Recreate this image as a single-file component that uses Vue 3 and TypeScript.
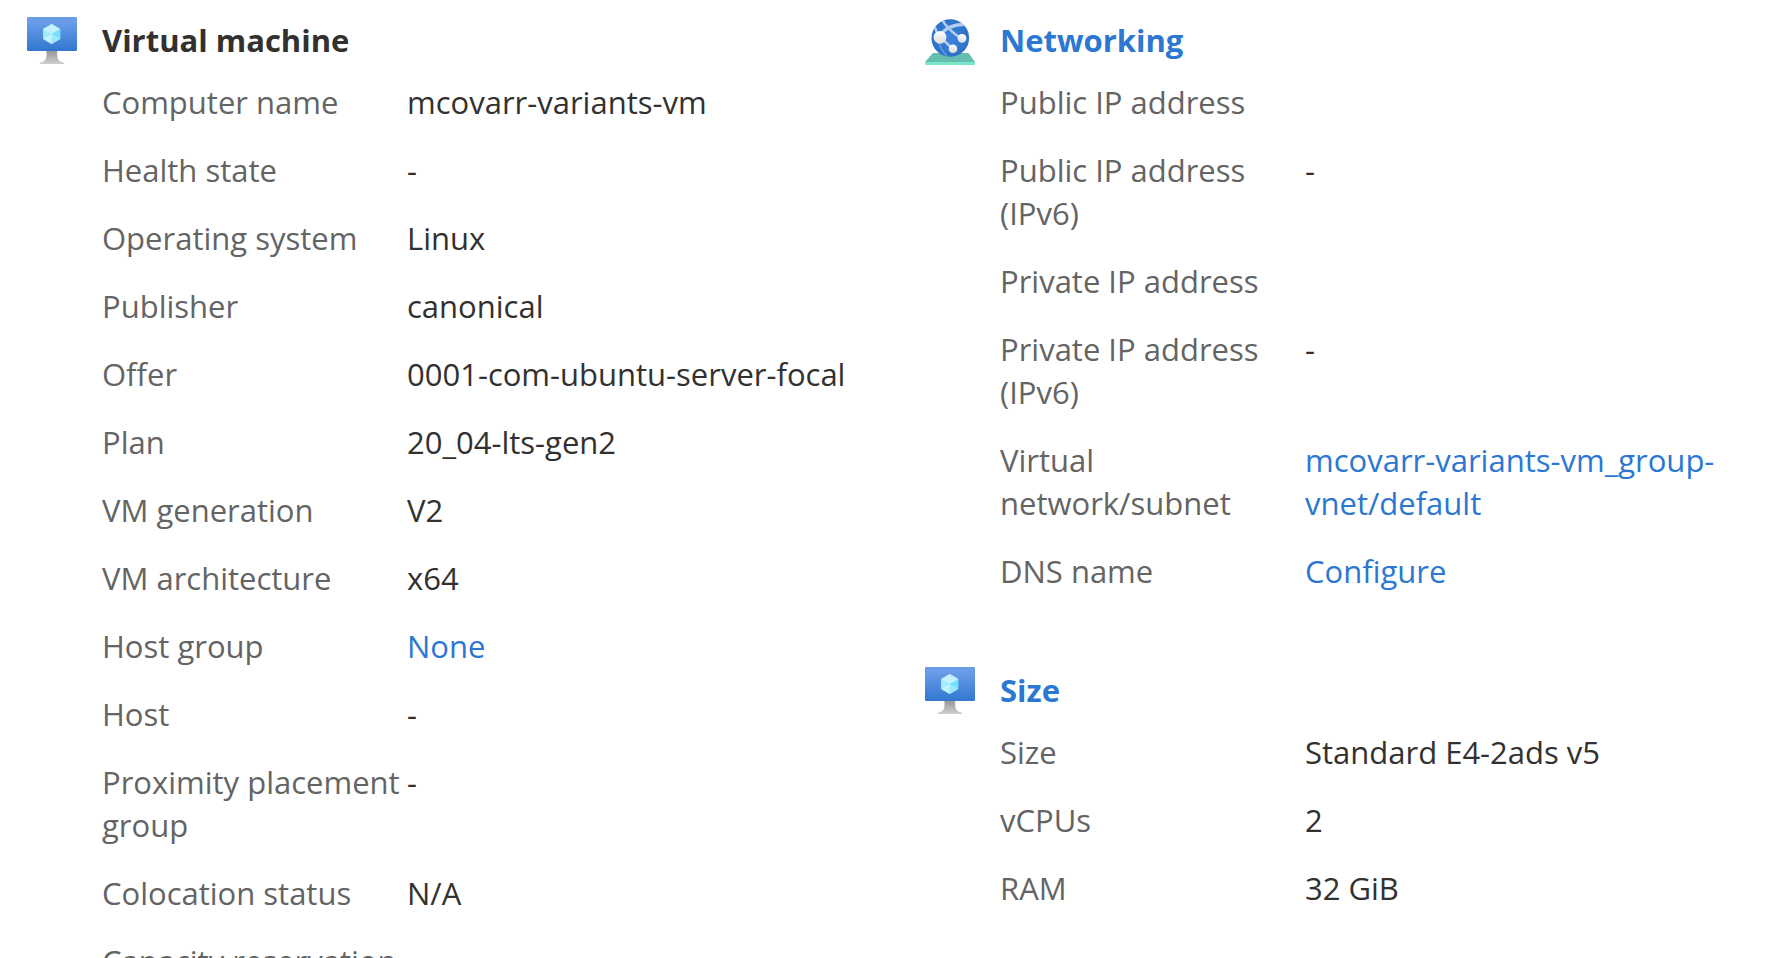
<script setup lang="ts">
interface Row {
  label: string
  value?: string
  link?: boolean
}

interface Section {
  id: string
  title: string
  icon: 'vm' | 'network'
  link: boolean
  rows: Row[]
}

const columns: Section[][] = [
  [
    {
      id: 'virtual-machine',
      title: 'Virtual machine',
      icon: 'vm',
      link: false,
      rows: [
        { label: 'Computer name', value: 'mcovarr-variants-vm' },
        { label: 'Health state', value: '-' },
        { label: 'Operating system', value: 'Linux' },
        { label: 'Publisher', value: 'canonical' },
        { label: 'Offer', value: '0001-com-ubuntu-server-focal' },
        { label: 'Plan', value: '20_04-lts-gen2' },
        { label: 'VM generation', value: 'V2' },
        { label: 'VM architecture', value: 'x64' },
        { label: 'Host group', value: 'None', link: true },
        { label: 'Host', value: '-' },
        { label: 'Proximity placement group', value: '-' },
        { label: 'Colocation status', value: 'N/A' },
        { label: 'Capacity reservation' },
      ],
    },
  ],
  [
    {
      id: 'networking',
      title: 'Networking',
      icon: 'network',
      link: true,
      rows: [
        { label: 'Public IP address' },
        { label: 'Public IP address (IPv6)', value: '-' },
        { label: 'Private IP address' },
        { label: 'Private IP address (IPv6)', value: '-' },
        { label: 'Virtual network/subnet', value: 'mcovarr-variants-vm_group-vnet/default', link: true },
        { label: 'DNS name', value: 'Configure', link: true },
      ],
    },
    {
      id: 'size',
      title: 'Size',
      icon: 'vm',
      link: true,
      rows: [
        { label: 'Size', value: 'Standard E4-2ads v5' },
        { label: 'vCPUs', value: '2' },
        { label: 'RAM', value: '32 GiB' },
      ],
    },
  ],
]
</script>

<template>
  <main class="overview">
    <div v-for="(column, index) in columns" :key="index" class="column">
      <section v-for="section in column" :key="section.id" class="section" :aria-labelledby="section.id">
        <svg v-if="section.icon === 'vm'" class="icon" viewBox="0 0 50 50" aria-hidden="true">
          <defs>
            <linearGradient :id="section.id + '-screen'" x1="0" y1="0" x2="0" y2="1">
              <stop offset="0.15" stop-color="#6a9ce8" />
              <stop offset="1" stop-color="#3077d0" />
            </linearGradient>
            <linearGradient :id="section.id + '-stand'" x1="0" y1="0" x2="0" y2="1">
              <stop offset="0" stop-color="#949494" />
              <stop offset="1" stop-color="#cfcfcf" />
            </linearGradient>
          </defs>
          <path d="M19.5 34h10.600c0 8 .4 10.800 5 12.200 1.500.4 2.400 1 2.400 1.800h-25c0-.8.9-1.400 2.400-1.800 4.600-1.400 4.600-4.200 4.600-12.200z" :fill="`url(#${section.id}-stand)`" />
          <rect y="1" width="50" height="34" rx="1.200" :fill="`url(#${section.id}-screen)`" />
          <path d="M24.700 8l8.500 5v10l-8.500 5-8.500-5V13z" fill="#9cebff" />
          <path d="M24.700 8l8.500 5-8.500 5-8.500-5z" fill="#c6f2fe" />
          <path d="M33.200 13v10l-8.500-5z" fill="#72e2fc" />
          <path d="M16.200 13l8.500 5-8.500 5z" fill="#a4edff" />
          <path d="M24.700 18l8.500 5-8.500 5z" fill="#9be9fd" />
          <path d="M24.700 18v10l-8.500-5z" fill="#c0f3ff" />
        </svg>
        <svg v-else class="icon" viewBox="0 0 50 50" aria-hidden="true">
          <defs>
            <radialGradient id="globe" cx="0.5" cy="0.5" r="0.5">
              <stop offset="0.2" stop-color="#3b80d9" />
              <stop offset="1" stop-color="#2d70c9" />
            </radialGradient>
            <linearGradient id="node" x1="0" y1="0" x2="0" y2="1">
              <stop offset="0" stop-color="#ffffff" />
              <stop offset="1" stop-color="#dcdce0" />
            </linearGradient>
            <clipPath id="globe-edge"><circle cx="25.300" cy="22" r="18.800" /></clipPath>
          </defs>
          <path d="M8 37h35.500L50 46H0z" fill="#65bdaf" />
          <path d="M0 46h50v1.500a1.500 1.500 0 0 1-1.500 1.500h-47A1.500 1.500 0 0 1 0 47.500z" fill="#7ce6cb" />
          <circle cx="25.300" cy="22" r="18.800" fill="url(#globe)" />
          <g clip-path="url(#globe-edge)" fill="none" stroke="#b4cdf2">
            <path d="M15 20C20 12 30 8 42 8.500" stroke-width="3.200" />
            <path d="M17 3.500C21 11 29 18 37 23" stroke-width="2.600" />
            <path d="M9 9C10 13 12 17 15 21L28 33" stroke-width="2.600" />
            <path d="M13 23C14 29 17 35 22 40" stroke-width="1.600" stroke="#5e97e0" />
          </g>
          <circle cx="15" cy="21.300" r="6.400" fill="url(#node)" />
          <circle cx="37" cy="22.300" r="4.400" fill="url(#node)" />
          <circle cx="28" cy="32.700" r="4.300" fill="url(#node)" />
        </svg>
        <div class="content">
          <h2 :id="section.id" class="title">
            <a v-if="section.link" href="#">{{ section.title }}</a>
            <template v-else>{{ section.title }}</template>
          </h2>
          <dl class="rows">
            <div v-for="row in section.rows" :key="row.label" class="row">
              <dt>{{ row.label }}</dt>
              <dd>
                <a v-if="row.link" href="#">{{ row.value }}</a>
                <template v-else>{{ row.value }}</template>
              </dd>
            </div>
          </dl>
        </div>
      </section>
    </div>
  </main>
</template>

<style>
body {
  margin: 0;
  background: #fff;
}
</style>

<style scoped>
.overview {
  box-sizing: border-box;
  height: 100vh;
  overflow: hidden;
  display: grid;
  grid-template-columns: 1fr 1fr;
  column-gap: 72px;
  padding: 16px 27px 0;
  color: #323130;
  font-family: 'Segoe UI', 'Open Sans', 'Noto Sans', sans-serif;
  font-size: 31px;
  line-height: 43px;
}

.column {
  display: flex;
  flex-direction: column;
  gap: 73px;
}

.section {
  display: flex;
  gap: 25px;
}

.icon {
  flex: none;
  width: 50px;
  height: 50px;
}

.content {
  flex: 1;
  min-width: 0;
  padding-top: 3px;
}

.title {
  margin: 0 0 19px;
  font-size: 31px;
  font-weight: 700;
  line-height: 43px;
}

.rows {
  display: flex;
  flex-direction: column;
  gap: 25px;
  margin: 0;
}

.row {
  display: grid;
  grid-template-columns: 305px 1fr;
}

dt {
  color: #646464;
}

dd {
  margin: 0;
}

a {
  color: #2b77d1;
  text-decoration: none;
}
</style>
